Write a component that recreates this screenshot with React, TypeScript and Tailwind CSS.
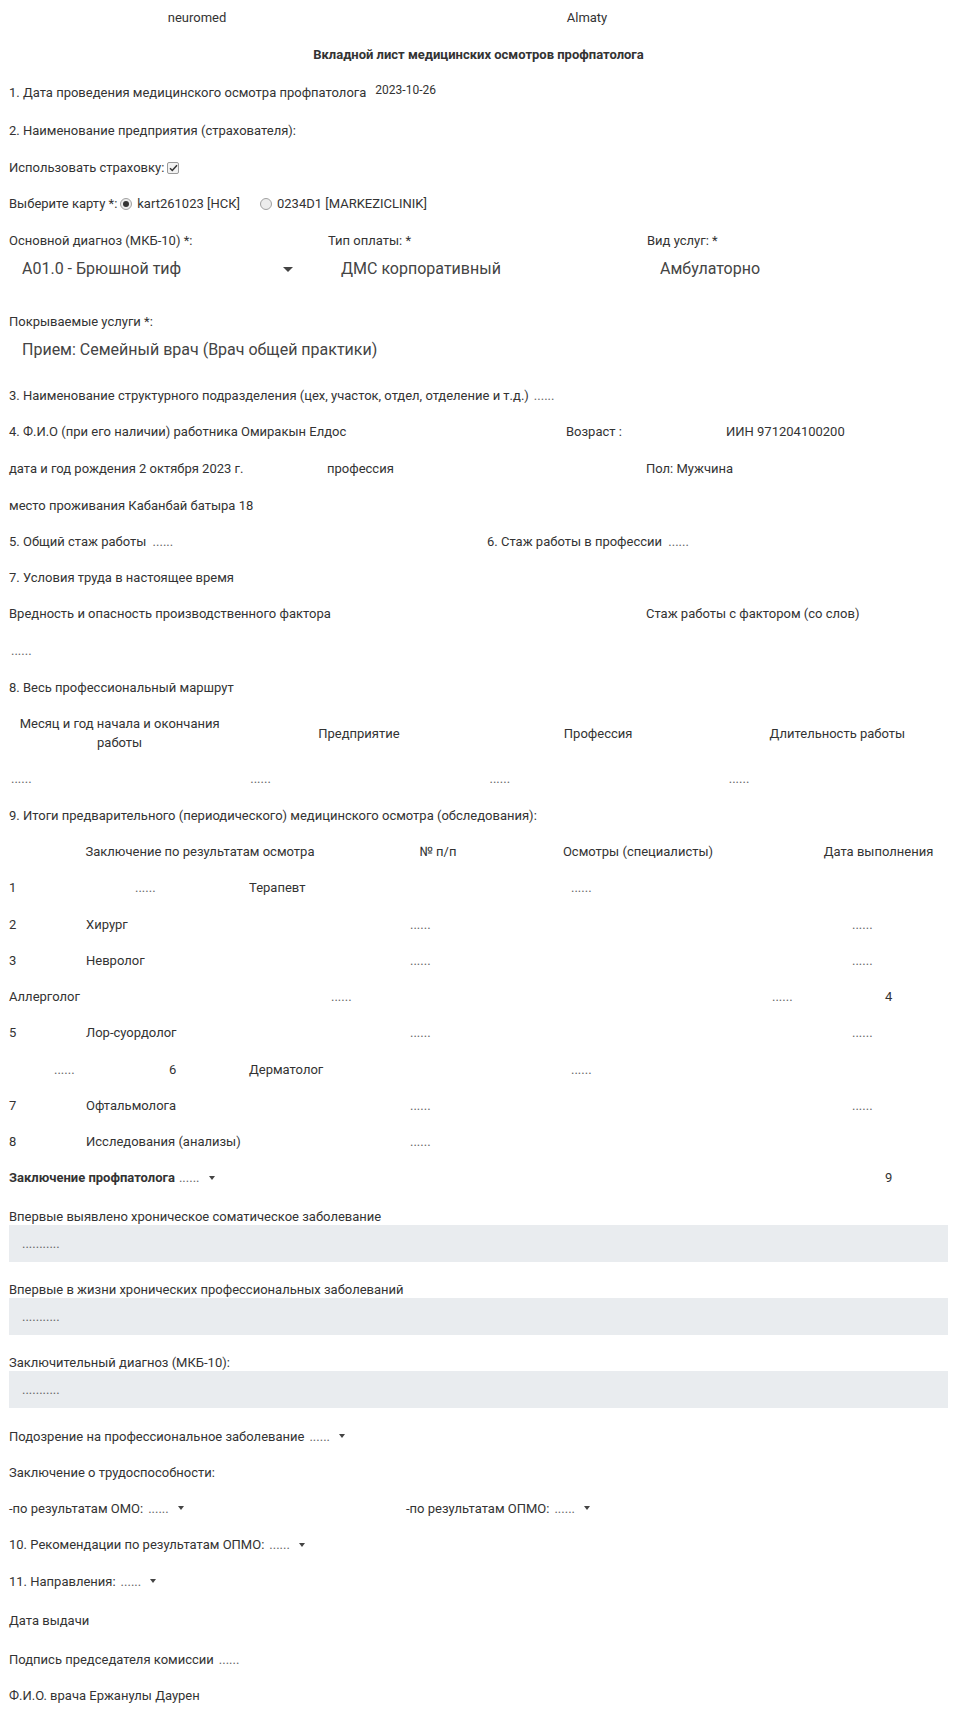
import React from 'react';

function Caret({ big }: { big?: boolean }) {
  if (big) {
    return (
      <svg width="10" height="5" viewBox="0 0 10 5">
        <path d="M0 0h10L5 5z" fill="#444" />
      </svg>
    );
  }
  return (
    <svg width="6" height="4" viewBox="0 0 6 4" className="ml-[9px]">
      <path d="M0 0h6L3 4z" fill="#444" />
    </svg>
  );
}

function Dots({ n = 6 }: { n?: number }) {
  return <span className="text-[#666]">{'.'.repeat(n)}</span>;
}

function CheckBox() {
  return (
    <span className="ml-[3px] flex h-[12px] w-[12px] items-center justify-center rounded-[2px] border border-[#9a9a9a] bg-[#f2f2f2]">
      <svg width="9" height="8" viewBox="0 0 9 8">
        <path d="M1 4.2l2.3 2.3L8 1.2" stroke="#333" strokeWidth="1.5" fill="none" />
      </svg>
    </span>
  );
}

function Radio({ on }: { on?: boolean }) {
  return (
    <span className="flex h-[12px] w-[12px] items-center justify-center rounded-full border border-[#a0a0a0] bg-[#ececec]">
      {on && <span className="h-[6px] w-[6px] rounded-full bg-[#333]" />}
    </span>
  );
}

function Row({ children, h = 'h-9' }: { children: React.ReactNode; h?: string }) {
  return <div className={`flex items-center pl-[9px] ${h}`}>{children}</div>;
}

function Box({ label, top }: { label: string; top: string }) {
  return (
    <div className={top}>
      <div className="flex h-[18px] items-center pl-[9px]">{label}</div>
      <div className="mx-[9px] flex h-[37px] items-center bg-[#e9ecef] pl-[13px]">
        <Dots n={11} />
      </div>
    </div>
  );
}

export default function App() {
  return (
    <div className="min-h-[1716px] w-[957px] bg-white font-[Roboto,sans-serif] text-[13px] text-[#333]">
      {/* шапка */}
      <div className="flex h-9 items-center">
        <div className="w-[394px] text-center">neuromed</div>
        <div className="w-[386px] text-center">Almaty</div>
      </div>
      <div className="flex h-[38px] items-center justify-center font-bold">
        Вкладной лист медицинских осмотров профпатолога
      </div>

      <Row h="h-[38px]">
        <span>1. Дата проведения медицинского осмотра профпатолога</span>
        <span className="mb-[6px] ml-[9px] text-[12px]">2023-10-26</span>
      </Row>
      <Row h="h-[38px]">2. Наименование предприятия (страхователя):</Row>
      <Row>
        <span>Использовать страховку:</span>
        <CheckBox />
      </Row>
      <Row>
        <span className="mr-[3px]">Выберите карту *:</span>
        <Radio on />
        <span className="ml-[5px]">kart261023 [НСК]</span>
        <span className="ml-[20px]">
          <Radio />
        </span>
        <span className="ml-[5px]">0234D1 [MARKEZICLINIK]</span>
      </Row>

      {/* диагноз / оплата / услуги */}
      <div className="grid grid-cols-3">
        <div>
          <div className="flex h-[37px] items-center pl-[9px]">Основной диагноз (МКБ-10) *:</div>
          <div className="flex h-5 items-center justify-between pl-[22px] pr-[26px] text-[16px] text-[#444]">
            <span>A01.0 - Брюшной тиф</span>
            <Caret big />
          </div>
        </div>
        <div>
          <div className="flex h-[37px] items-center pl-[9px]">Тип оплаты: *</div>
          <div className="flex h-5 items-center pl-[22px] text-[16px] text-[#444]">ДМС корпоративный</div>
        </div>
        <div>
          <div className="flex h-[37px] items-center pl-[9px]">Вид услуг: *</div>
          <div className="flex h-5 items-center pl-[22px] text-[16px] text-[#444]">Амбулаторно</div>
        </div>
      </div>
      <div className="mt-[24px] flex h-[37px] items-center pl-[9px]">Покрываемые услуги *:</div>
      <div className="flex h-5 items-center pl-[22px] text-[16px] text-[#444]">
        Прием: Семейный врач (Врач общей практики)
      </div>

      <div className="mt-[18px]">
        <Row>
          <span>3. Наименование структурного подразделения (цех, участок, отдел, отделение и т.д.)</span>
          <span className="ml-[5px]"><Dots /></span>
        </Row>
        <Row>
          <span className="w-[557px]">4. Ф.И.О (при его наличии) работника Омиракын Елдос</span>
          <span className="w-[160px]">Возраст :</span>
          <span>ИИН 971204100200</span>
        </Row>
        <Row h="h-[37px]">
          <span className="w-[318px]">дата и год рождения 2 октября 2023 г.</span>
          <span className="w-[319px]">профессия</span>
          <span>Пол: Мужчина</span>
        </Row>
        <Row h="h-[37px]">место проживания Кабанбай батыра 18</Row>
        <Row>
          <span className="w-[478px]">
            5. Общий стаж работы <span className="ml-[3px]"><Dots /></span>
          </span>
          <span>
            6. Стаж работы в профессии <span className="ml-[3px]"><Dots /></span>
          </span>
        </Row>
        <Row>7. Условия труда в настоящее время</Row>
        <Row>
          <span className="w-[637px]">Вредность и опасность производственного фактора</span>
          <span>Стаж работы с фактором (со слов)</span>
        </Row>
        <div className="flex h-[38px] items-center pl-[11px]"><Dots /></div>
        <Row>8. Весь профессиональный маршрут</Row>

        {/* таблица маршрута */}
        <div className="grid h-[54px] grid-cols-4 items-center leading-[19px]">
          <div className="px-[10px] text-center">Месяц и год начала и окончания работы</div>
          <div className="px-[10px] text-center">Предприятие</div>
          <div className="px-[10px] text-center">Профессия</div>
          <div className="px-[10px] text-center">Длительность работы</div>
        </div>
        <div className="grid h-[38px] grid-cols-4 items-center">
          <div className="pl-[11px]"><Dots /></div>
          <div className="pl-[11px]"><Dots /></div>
          <div className="pl-[11px]"><Dots /></div>
          <div className="pl-[11px]"><Dots /></div>
        </div>

        <Row>9. Итоги предварительного (периодического) медицинского осмотра (обследования):</Row>

        {/* таблица итогов */}
        <div className="flex h-9 items-center">
          <div className="w-[400px] text-center">Заключение по результатам осмотра</div>
          <div className="w-[76px] text-center">№ п/п</div>
          <div className="w-[324px] text-center">Осмотры (специалисты)</div>
          <div className="flex-1 text-center">Дата выполнения</div>
        </div>

        <Row h="h-[36.25px]">
          <span className="w-[126px]">1</span>
          <span className="w-[114px]"><Dots /></span>
          <span className="w-[322px]">Терапевт</span>
          <Dots />
        </Row>
        {[
          ['2', 'Хирург'],
          ['3', 'Невролог'],
        ].map(([n, name]) => (
          <Row key={n} h="h-[36.25px]">
            <span className="w-[77px]">{n}</span>
            <span className="w-[324px]">{name}</span>
            <span className="w-[442px]"><Dots /></span>
            <Dots />
          </Row>
        ))}
        <Row h="h-[36.25px]">
          <span className="w-[322px]">Аллерголог</span>
          <span className="w-[441px]"><Dots /></span>
          <span className="w-[113px]"><Dots /></span>
          <span>4</span>
        </Row>
        <Row h="h-[36.25px]">
          <span className="w-[77px]">5</span>
          <span className="w-[324px]">Лор-суордолог</span>
          <span className="w-[442px]"><Dots /></span>
          <Dots />
        </Row>
        <div className="flex h-[36.25px] items-center pl-[54px]">
          <span className="w-[115px]"><Dots /></span>
          <span className="w-[80px]">6</span>
          <span className="w-[322px]">Дерматолог</span>
          <Dots />
        </div>
        <Row h="h-[36.25px]">
          <span className="w-[77px]">7</span>
          <span className="w-[324px]">Офтальмолога</span>
          <span className="w-[442px]"><Dots /></span>
          <Dots />
        </Row>
        <Row h="h-[36.25px]">
          <span className="w-[77px]">8</span>
          <span className="w-[324px]">Исследования (анализы)</span>
          <Dots />
        </Row>
        <Row h="h-[36.25px]">
          <span className="flex w-[876px] items-center">
            <span className="font-bold">Заключение профпатолога</span>
            <span className="ml-[4px]"><Dots /></span>
            <Caret />
          </span>
          <span>9</span>
        </Row>
      </div>

      <Box top="mt-[11px]" label="Впервые выявлено хроническое соматическое заболевание" />
      <Box top="mt-[18px]" label="Впервые в жизни хронических профессиональных заболеваний" />
      <Box top="mt-[18px]" label="Заключительный диагноз (МКБ-10):" />

      <div className="mt-[10px]">
        <Row>
          <span>Подозрение на профессиональное заболевание</span>
          <span className="ml-[5px]"><Dots /></span>
          <Caret />
        </Row>
        <Row>Заключение о трудоспособности:</Row>
        <Row>
          <span className="flex w-[397px] items-center">
            <span>-по результатам ОМО:</span>
            <span className="ml-[5px]"><Dots /></span>
            <Caret />
          </span>
          <span>-по результатам ОПМО:</span>
          <span className="ml-[5px]"><Dots /></span>
          <Caret />
        </Row>
        <Row h="h-[37px]">
          <span>10. Рекомендации по результатам ОПМО:</span>
          <span className="ml-[5px]"><Dots /></span>
          <Caret />
        </Row>
        <Row>
          <span>11. Направления:</span>
          <span className="ml-[5px]"><Dots /></span>
          <Caret />
        </Row>
        <Row h="h-[42px]">Дата выдачи</Row>
        <Row>
          <span>Подпись председателя комиссии</span>
          <span className="ml-[5px]"><Dots /></span>
        </Row>
        <Row>Ф.И.О. врача Ержанулы Даурен</Row>
      </div>
    </div>
  );
}
